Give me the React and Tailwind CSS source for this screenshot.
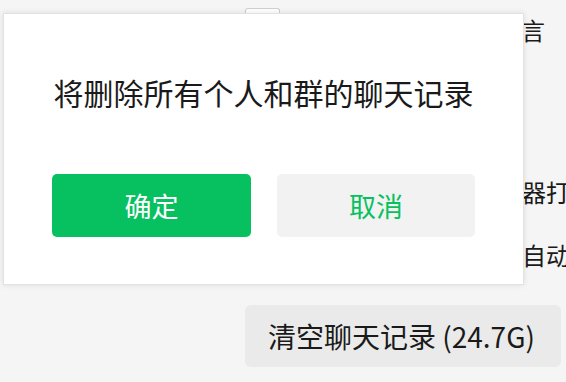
import React from "react";

const font = { fontFamily: '"Noto Sans CJK SC", "Noto Sans", sans-serif' };

const App = () => {
  return (
    <div
      className="relative w-[566px] h-[382px] overflow-hidden bg-[#f5f5f5] text-[#1a1a1a]"
      style={font}
    >
      {/* settings page behind the dialog */}
      <div className="flex flex-col">
        <div className="ml-[245px] mt-[8px] w-[35px] h-[7px] border border-b-0 border-[#cfcfcf] rounded-t-[3px] bg-white" />

        <div className="ml-[497px] text-[24px] leading-[30px] whitespace-nowrap">
          语言
        </div>

        <div className="mt-[132px] ml-[426px] text-[24px] leading-[30px] whitespace-nowrap">
          默认浏览器打
        </div>

        <div className="mt-[33px] ml-[474px] text-[24px] leading-[30px] whitespace-nowrap">
          文件自动
        </div>

        <button className="mt-[35px] ml-[245px] w-[316px] h-[62px] rounded-[6px] bg-[#eaeaea] pl-[23px] text-left text-[28px] leading-none text-[#1a1a1a] whitespace-nowrap">
          清空聊天记录 (24.7G)
        </button>
      </div>

      {/* confirm dialog */}
      <div className="absolute left-[3px] top-[13px] w-[521px] h-[272px] bg-white border border-[#e2e2e2] shadow-[0_0_6px_rgba(0,0,0,0.10)] flex flex-col items-center">
        <p className="mt-[63px] text-[30px] leading-[30px] text-[#1a1a1a] whitespace-nowrap">
          将删除所有个人和群的聊天记录
        </p>

        <div className="mt-[67px] flex gap-[26px]">
          <button className="w-[199px] h-[63px] rounded-[5px] bg-[#07c160] text-white text-[27px] leading-none">
            确定
          </button>
          <button className="w-[198px] h-[63px] rounded-[5px] bg-[#f2f2f2] text-[#07c160] text-[27px] leading-none">
            取消
          </button>
        </div>
      </div>
    </div>
  );
};

export default App;
